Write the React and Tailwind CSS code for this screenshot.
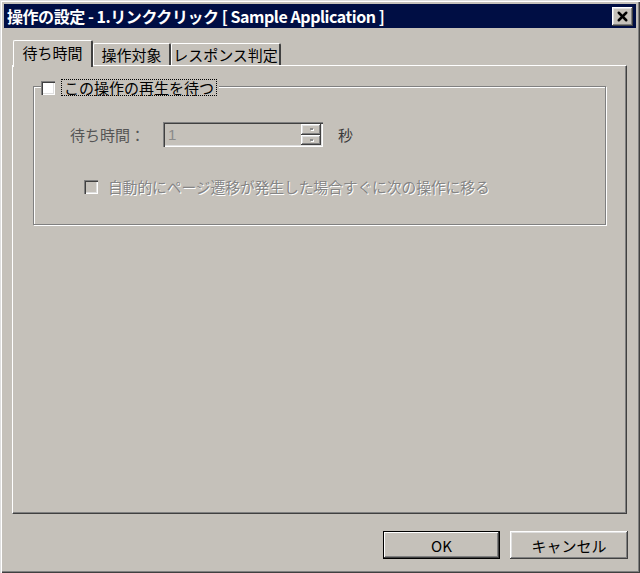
import { X } from 'lucide-react'

const raised =
  'shadow-[inset_-1px_-1px_0_#404040,inset_1px_1px_0_#ffffff,inset_-2px_-2px_0_#808080,inset_2px_2px_0_#dfdfdf]'
const sunken =
  'shadow-[inset_1px_1px_0_#808080,inset_2px_2px_0_#404040,inset_-1px_-1px_0_#ffffff,inset_-2px_-2px_0_#dfdfdf]'

function CheckBox({ disabled }) {
  return (
    <span
      className={`block w-[14px] h-[14px] shrink-0 ${sunken} ${disabled ? 'bg-[#c5c1ba]' : 'bg-white'}`}
    />
  )
}

function SpinArrow() {
  return (
    <div className={`flex-1 flex items-center justify-center bg-[#c5c1ba] ${raised}`}>
      <span className="block w-[3px] h-[2px] bg-[#8a8a8a] shadow-[1px_1px_0_#ffffff]" />
    </div>
  )
}

export default function App() {
  return (
    <div className="w-[640px] h-[573px] bg-[#c5c1ba] p-[4px] flex flex-col font-['Noto_Sans_CJK_JP',sans-serif] shadow-[inset_1px_1px_0_#dfdfdf,inset_2px_2px_0_#ffffff,inset_-1px_-1px_0_#404040,inset_-2px_-2px_0_#808080] select-none">
      {/* Title bar */}
      <div className="h-[24px] bg-[#000e44] flex items-center justify-between pl-[3px] pr-[3px]">
        <span className="text-white font-bold text-[16px] leading-none tracking-[-0.45px] whitespace-pre">
          操作の設定 - 1.リンククリック [ Sample Application ]
        </span>
        <button className={`w-[21px] h-[19px] bg-[#c5c1ba] flex items-center justify-center ${raised}`}>
          <X className="w-[15px] h-[15px] text-black" strokeWidth={4} />
        </button>
      </div>

      {/* Tabs */}
      <div className="mt-[12px] ml-[9px] h-[25px] flex items-end relative z-10">
        <div className="w-[80px] h-[27px] -mb-[2px] pb-[3px] bg-[#c5c1ba] border-l border-t border-white border-r-2 border-r-[#404040] rounded-t-[2px] flex items-center justify-center text-[15px] text-black leading-none">
          待ち時間
        </div>
        <div className="w-[78px] h-[22px] bg-[#c5c1ba] border-l border-t border-white border-r-2 border-r-[#404040] rounded-t-[2px] flex items-center justify-center text-[15px] text-black leading-none">
          操作対象
        </div>
        <div className="w-[110px] h-[22px] bg-[#c5c1ba] border-l border-t border-white border-r-2 border-r-[#404040] rounded-t-[2px] flex items-center justify-center text-[15px] text-black leading-none">
          レスポンス判定
        </div>
      </div>

      {/* Tab panel */}
      <div className="ml-[8px] w-[615px] h-[449px] border-l border-t border-white border-r border-b border-r-[#404040] border-b-[#404040] shadow-[inset_-1px_-1px_0_#808080] pt-[20px] pl-[20px]">
        {/* Group box */}
        <div className="relative w-[573px] h-[139px] border border-[#808080] shadow-[1px_1px_0_#ffffff,inset_1px_1px_0_#ffffff]">
          <div className="absolute left-[7px] -top-[8px] flex items-center gap-[6px] bg-[#c5c1ba] pr-[2px]">
            <CheckBox />
            <span className="px-[2px] border border-dotted border-black text-[15px] leading-[15px] text-black">
              この操作の再生を待つ
            </span>
          </div>

          <div className="pt-[35px] pl-[36px] flex items-center">
            <span className="w-[93px] text-[15px] text-[#555555] leading-none">待ち時間：</span>
            <div className={`w-[160px] h-[25px] bg-[#c5c1ba] ${sunken} flex items-stretch p-[2px]`}>
              <span className="flex-1 pl-[3px] text-[15px] text-[#8a8a8a] leading-[21px] font-['Liberation_Sans',sans-serif]">
                1
              </span>
              <div className="w-[20px] flex flex-col gap-0">
                <SpinArrow />
                <SpinArrow />
              </div>
            </div>
            <span className="ml-[15px] text-[15px] text-[#3a3a3a] leading-none">秒</span>
          </div>

          <div className="mt-[33px] pl-[50px] flex items-center gap-[10px]">
            <CheckBox disabled />
            <span className="text-[14.7px] leading-none text-[#858585] [text-shadow:1px_1px_0_#ffffff]">
              自動的にページ遷移が発生した場合すぐに次の操作に移る
            </span>
          </div>
        </div>
      </div>

      {/* Buttons */}
      <div className="mt-[17px] pr-[8px] flex justify-end gap-[10px]">
        <button className="w-[117px] h-[28px] border border-black bg-[#c5c1ba] shadow-[inset_-1px_-1px_0_#404040,inset_1px_1px_0_#ffffff,inset_-2px_-2px_0_#808080] text-[15px] text-black leading-none">
          OK
        </button>
        <button className={`w-[118px] h-[28px] bg-[#c5c1ba] ${raised} text-[15px] text-black leading-none`}>
          キャンセル
        </button>
      </div>
    </div>
  )
}
